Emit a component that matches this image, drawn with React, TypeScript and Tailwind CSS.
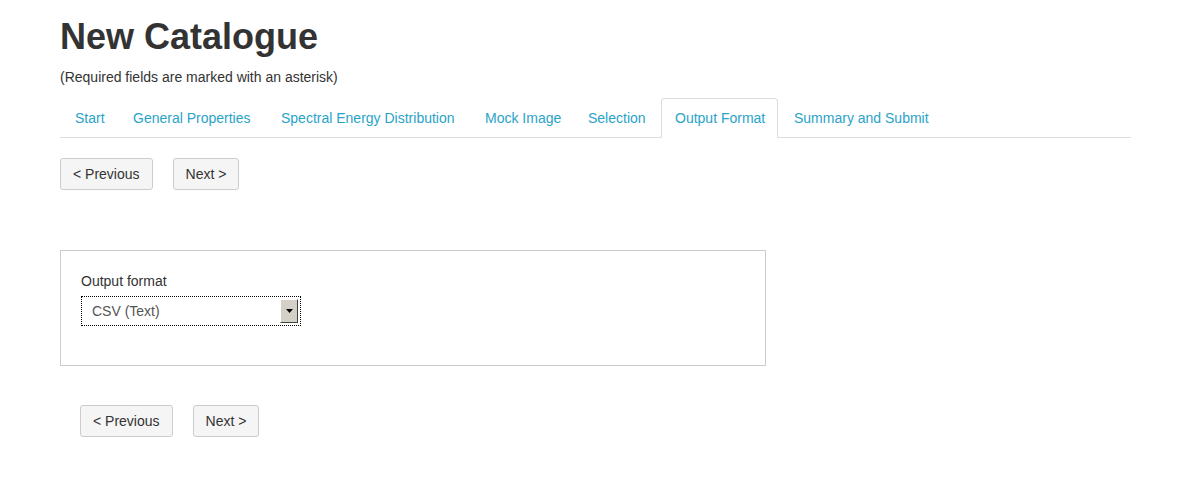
import React from "react";

const tabs: { label: string; w: string }[] = [
  { label: "Start", w: "w-[57px] pl-[14px]" },
  { label: "General Properties", w: "w-[146px] pl-[13px]" },
  { label: "Spectral Energy Distribution", w: "w-[202px] pl-[13px]" },
  { label: "Mock Image", w: "w-[101px] pl-[13px]" },
  { label: "Selection", w: "w-[85px] pl-[13px]" },
  { label: "Output Format", w: "w-[117px] pl-[13px]" },
  { label: "Summary and Submit", w: "w-[162px] pl-[13px]" },
];

function Btn({ children }: { children: React.ReactNode }) {
  return (
    <button className="h-[32px] px-[12px] bg-[#f5f5f5] border border-[#cccccc] rounded-[3px] text-[14px] text-[#333333] leading-none">
      {children}
    </button>
  );
}

export default function App() {
  return (
    <div
      className="min-h-[497px] bg-white text-[#333333] text-[14px]"
      style={{ fontFamily: '"Liberation Sans", Arial, sans-serif' }}
    >
      <div className="w-[1071px] ml-[60px] pt-[17px]">
        <h1 className="text-[36px] font-bold leading-[40px] text-[#333333]">New Catalogue</h1>
        <p className="mt-[10px] text-[14px] leading-[20px]">(Required fields are marked with an asterisk)</p>
        <ul className="mt-[11px] flex border-b border-[#dddddd] h-[40px]">
          {tabs.map((t) => {
            const active = t.label === "Output Format";
            return (
              <li key={t.label} className="-mb-px mr-[2px]">
                <span
                  className={
                    "block h-[40px] pt-[9px] leading-[20px] text-[14px] text-[#2aa3c9] rounded-t-[4px] border whitespace-nowrap " +
                    t.w +
                    " " +
                    (active ? "border-[#dddddd] border-b-white bg-white" : "border-transparent")
                  }
                >
                  {t.label}
                </span>
              </li>
            );
          })}
        </ul>
        <div className="flex gap-[20px] mt-[20px]">
          <Btn>&lt; Previous</Btn>
          <Btn>Next &gt;</Btn>
        </div>
        <div className="mt-[60px] w-[706px] h-[116px] border border-[#cccccc] pt-[21px] px-[20px]">
          <div className="text-[14px] leading-[18px]">Output format</div>
          <div className="mt-[6px] w-[220px] h-[30px] border border-dotted border-[#000000] flex items-center justify-between pl-[10px] pr-[2px]">
            <span className="text-[14px] text-[#555555]">CSV (Text)</span>
            <span className="w-[18px] h-[24px] bg-[#d4d0c8] border border-t-white border-l-white border-r-[#404040] border-b-[#404040] flex items-center justify-center">
              <svg width="7" height="4" viewBox="0 0 7 4">
                <path d="M0 0h7L3.5 4z" fill="#000" />
              </svg>
            </span>
          </div>
        </div>
        <div className="flex gap-[20px] mt-[39px] ml-[20px]">
          <Btn>&lt; Previous</Btn>
          <Btn>Next &gt;</Btn>
        </div>
      </div>
    </div>
  );
}
